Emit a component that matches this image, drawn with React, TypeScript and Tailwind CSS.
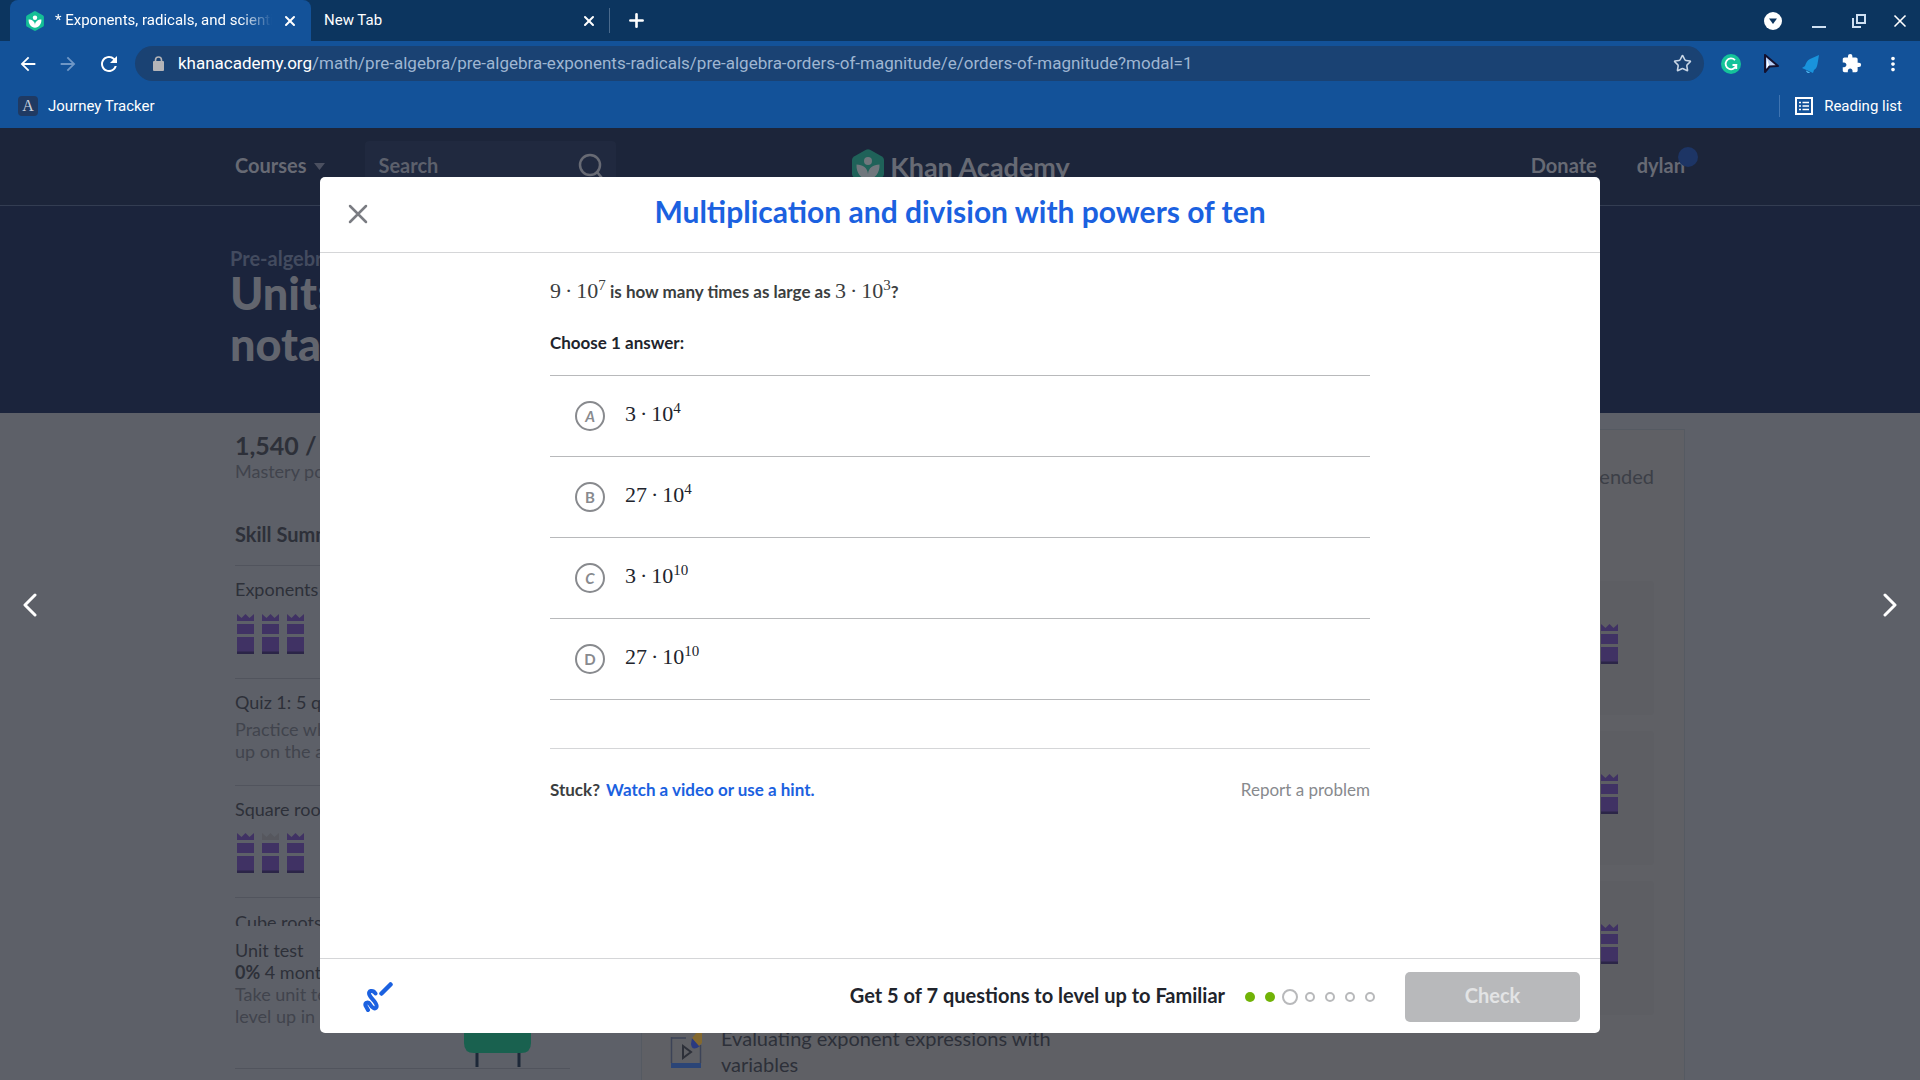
import type React from "react";
import { Plus, Star, X } from "lucide-react";
import {
	MdArrowBack,
	MdArrowForward,
	MdExtension,
	MdMoreVert,
	MdRefresh,
} from "react-icons/md";

const KhanMark: React.FC<{ className: string; hex: string; leaf: string }> = ({
	className,
	hex,
	leaf,
}) => (
	<svg viewBox="0 0 32 36" className={className} aria-hidden="true">
		<path
			d="M14 .7 2 7.500Q0 8.700 0 11v14q0 2.300 2 3.500l12 6.800q2 1.100 4 0l12-6.800q2-1.200 2-3.500V11q0-2.300-2-3.500L18 .7q-2-1.100-4 0Z"
			fill={hex}
		/>
		<circle cx="16" cy="12" r="4" fill={leaf} />
		<path
			d="M4.500 15.500C11 15.500 15.500 19 16 25c.5-6 5-9.500 11.500-9.500C28 24 23 30 16 30S4 24 4.500 15.500Z"
			fill={leaf}
		/>
	</svg>
);

const Castle: React.FC<{ crown?: boolean }> = ({ crown = true }) => (
	<svg viewBox="0 0 17 40" className="h-10 w-[17px]" aria-hidden="true">
		<path
			d="M0 0 4.500 4 8.500 0l4 4L17 0v7H0Z"
			fill={crown ? "#403264" : "#56575e"}
		/>
		<path d="M0 10h17v10H0ZM0 23h17v17H0Z" fill="#403264" />
		<path d="M0 37.500h17V40H0Z" fill="#2b2547" />
	</svg>
);

const skills = [
	{ name: "Exponents", crowns: [true, true, true] },
	{ name: "Square roots", crowns: [true, false, true] },
];

const Power: React.FC<{ factor: string; exponent: string }> = ({
	factor,
	exponent,
}) => (
	<span className="font-['Liberation_Serif',serif] text-[22px] leading-6 font-normal whitespace-nowrap">
		{factor}
		<span className="mx-1">·</span>
		10
		<sup className="relative -top-2 align-baseline text-[15px] leading-none">
			{exponent}
		</sup>
	</span>
);

const choices = [
	{ letter: "A", factor: "3", exponent: "4", slant: true },
	{ letter: "B", factor: "27", exponent: "4", slant: false },
	{ letter: "C", factor: "3", exponent: "10", slant: true },
	{ letter: "D", factor: "27", exponent: "10", slant: false },
];

const Browser: React.FC = () => (
	<header className="shrink-0 bg-[#135299] font-[Roboto,sans-serif] text-white">
		{/* Tab strip */}
		<div className="flex h-[41px] items-center bg-[#0c355f] pl-[10px] text-[15px]">
			<div className="flex h-full w-[301px] items-center rounded-t-lg bg-[#135299] pr-[13px] pl-[15px]">
				<KhanMark className="h-5 w-5 shrink-0" hex="#14bf96" leaf="#fff" />
				<span className="ml-[10px] flex-1 overflow-hidden whitespace-nowrap mask-r-from-85%">
					* Exponents, radicals, and scientific
				</span>
				<button type="button" aria-label="Close tab" className="ml-[10px]">
					<X size={16} strokeWidth={3} />
				</button>
			</div>
			<div className="flex h-full w-[298px] items-center justify-between pr-3 pl-[13px]">
				<span>New Tab</span>
				<button type="button" aria-label="Close tab">
					<X size={16} strokeWidth={3} />
				</button>
			</div>
			<div className="h-[25px] w-px bg-[#4a6a8c]" />
			<button type="button" aria-label="New tab" className="ml-4">
				<Plus size={21} strokeWidth={3} />
			</button>
			<div className="ml-auto flex items-center gap-[22px] pr-[10px]">
				<button type="button" aria-label="Search tabs">
					<svg viewBox="0 0 18 18" className="h-[18px] w-[18px]">
						<circle cx="9" cy="9" r="9" fill="#fff" />
						<path d="M5 6.500h8L9 12Z" fill="#0c355f" />
					</svg>
				</button>
				<button type="button" aria-label="Minimize" className="ml-[6px]">
					<svg viewBox="0 0 18 18" className="h-[18px] w-[18px]">
						<path d="M2 15h14" stroke="#cfe0f2" strokeWidth="2" />
					</svg>
				</button>
				<button type="button" aria-label="Restore">
					<svg
						viewBox="0 0 18 18"
						className="h-[18px] w-[18px]"
						fill="none"
						stroke="#cfe0f2"
						strokeWidth="2"
					>
						<path d="M7 3h8v8H7ZM3 6v9h8" />
					</svg>
				</button>
				<button type="button" aria-label="Close window">
					<X size={20} strokeWidth={2} />
				</button>
			</div>
		</div>

		{/* Toolbar */}
		<div className="flex items-center pt-[5px] pr-4">
			<div className="flex items-center gap-[18px] pl-[17px]">
				<button type="button" aria-label="Back">
					<MdArrowBack size={22} />
				</button>
				<button type="button" aria-label="Forward" className="text-[#6f97c6]">
					<MdArrowForward size={22} />
				</button>
				<button type="button" aria-label="Reload">
					<MdRefresh size={24} />
				</button>
			</div>
			<div className="ml-[14px] flex h-[35px] flex-1 items-center rounded-full bg-[#1a4273] pr-3 pl-[18px]">
				<svg viewBox="0 0 11 15" className="h-[15px] w-[11px]">
					<path
						d="M2.500 6V4a3 3 0 0 1 6 0v2"
						fill="none"
						stroke="#b4b4b8"
						strokeWidth="1.600"
					/>
					<rect y="5" width="11" height="10" rx="1" fill="#b4b4b8" />
				</svg>
				<p className="ml-[14px] flex-1 pt-px text-[17px] whitespace-nowrap text-[#9fb6d2]">
					<span className="text-white">khanacademy.org</span>
					/math/pre-algebra/pre-algebra-exponents-radicals/pre-algebra-orders-of-magnitude/e/orders-of-magnitude?modal=1
				</p>
				<button type="button" aria-label="Bookmark this page">
					<Star size={19} strokeWidth={2} className="text-[#c8d6e6]" />
				</button>
			</div>
			<div className="ml-[17px] flex items-center gap-5">
				<svg viewBox="0 0 20 20" className="h-5 w-5" fill="none">
					<circle cx="10" cy="10" r="10" fill="#15c39a" />
					<path
						d="M14 6.200A5.400 5.400 0 1 0 15.300 11H11.500M15.300 11v4"
						stroke="#fff"
						strokeWidth="1.800"
					/>
				</svg>
				<svg viewBox="0 0 20 20" className="h-5 w-5">
					<path
						d="M4 1v17l4.500-5.500L17 12Z"
						fill="#b9cff5"
						stroke="#14112e"
						strokeWidth="2"
						strokeLinejoin="round"
					/>
					<path d="M6 5v9l2-3Z" fill="#fff" />
				</svg>
				<svg viewBox="0 0 20 20" className="h-5 w-5">
					<path
						d="M18 1 9 5c-3 1.500-4 4-5 7l-3 2 11 5 1-3c2-1 3-3 3.500-6Z"
						fill="#1993dc"
					/>
					<path d="M5 16.500a2.500 2.500 0 0 0 4 2Z" fill="#4db6f0" />
				</svg>
				<MdExtension size={21} />
				<button type="button" aria-label="Menu">
					<MdMoreVert size={22} />
				</button>
			</div>
		</div>

		{/* Bookmarks */}
		<div className="flex h-[47px] items-center justify-between px-[18px] pt-[3px] text-[15px]">
			<a href="#journey" className="flex items-center gap-[10px]">
				<span className="flex h-5 w-5 items-center justify-center rounded-sm bg-[#1f3a63] font-['Liberation_Serif',serif] text-base text-[#c8d0dc]">
					A
				</span>
				Journey Tracker
			</a>
			<button
				type="button"
				className="flex items-center border-l border-[#3f74b1] pl-[15px]"
			>
				<svg
					viewBox="0 0 18 18"
					className="mr-[11px] h-[18px] w-[18px]"
					fill="none"
					stroke="#fff"
					strokeWidth="2"
				>
					<path d="M1 1h16v16H1Z" />
					<path
						d="M4 5.500h2M4 9h2M4 12.500h2M7.500 5.500H14M7.500 9H14M7.500 12.500H14"
						strokeWidth="1.600"
					/>
				</svg>
				Reading list
			</button>
		</div>
	</header>
);

const CoursePage: React.FC = () => (
	<div className="flex h-full flex-col bg-[#5d6068] text-[#2d3039]">
		<nav className="shrink-0 border-b border-[#333d52] bg-[#1c253a] text-xl font-bold text-[#676a74]">
			<div className="mx-auto grid h-[77px] w-full max-w-[1450px] grid-cols-3 items-center">
				<div className="flex items-center pb-1">
					<a href="#courses" className="flex items-center gap-2">
						Courses
						<svg viewBox="0 0 11 7" className="mt-1 h-[7px] w-[11px]">
							<path d="M0 0h11L5.500 7Z" fill="#4b5060" />
						</svg>
					</a>
					<label className="ml-10 flex h-12 w-[251px] items-center rounded bg-[#20293f] px-[13px]">
						<input
							type="search"
							placeholder="Search"
							className="w-full min-w-0 outline-none placeholder:text-[#5c606c]"
						/>
						<svg
							viewBox="0 0 26 26"
							className="h-[26px] w-[26px] shrink-0"
							fill="none"
							stroke="#676a74"
							strokeWidth="2.500"
							strokeLinecap="round"
						>
							<circle cx="13" cy="13" r="10" />
							<path d="m20 20 5 6" />
						</svg>
					</label>
				</div>
				<a
					href="#home"
					className="flex items-center justify-center gap-[6px] pl-[2px] text-[27px] leading-8"
				>
					<KhanMark className="h-9 w-8" hex="#1f6259" leaf="#70777d" />
					<span>Khan Academy</span>
				</a>
				<div className="flex justify-end gap-10 pb-1">
					<a href="#donate">Donate</a>
					<a href="#profile" className="relative">
						dylan
						<span className="absolute -top-1 -right-[13px] h-5 w-5 rounded-full bg-[#1d3565]" />
					</a>
				</div>
			</div>
		</nav>

		<section className="h-[207px] shrink-0 bg-[#1b243c]">
			<div className="mx-auto w-full max-w-[1460px] pt-10">
				<p className="text-xl leading-6 font-bold text-[#434b5f]">Pre-algebra</p>
				<h1 className="-mt-[2px] text-[45px] leading-[51px] font-black text-[#62656e]">
					Unit: Exponents
					<br />
					notation
				</h1>
			</div>
		</section>

		<div className="mx-auto flex min-h-0 w-full max-w-[1450px] flex-1">
			<aside className="w-[335px] shrink-0 pt-4 text-lg leading-[22px]">
				<p className="text-[25px] leading-8 font-bold">1,540 / 2,200</p>
				<p className="leading-5 text-[#41444d]">Mastery points</p>
				<h2 className="mt-[41px] mb-[19px] text-xl leading-6 font-bold">
					Skill Summary
				</h2>
				<div className="h-[361px] overflow-hidden">
					<div className="h-[113px] border-t border-[#51545d] pt-3">
						{skills[0].name}
						<div className="mt-[14px] ml-[2px] flex gap-2">
							{skills[0].crowns.map((crown, i) => (
								<Castle key={i} crown={crown} />
							))}
						</div>
					</div>
					<div className="h-[107px] border-t border-[#51545d] pt-3">
						<p>Quiz 1: 5 questions</p>
						<p className="mt-[5px] text-[#41444d]">
							Practice what you’ve learned
							<br />
							up on the above skills
						</p>
					</div>
					<div className="h-[112px] border-t border-[#51545d] pt-3">
						{skills[1].name}
						<div className="mt-[13px] ml-[2px] flex gap-2">
							{skills[1].crowns.map((crown, i) => (
								<Castle key={i} crown={crown} />
							))}
						</div>
					</div>
					<div className="border-t border-[#51545d] pt-[13px]">Cube roots</div>
				</div>
				<div className="flex justify-between border-b border-[#51545d] pt-[13px] pr-[39px]">
					<div className="pb-[41px]">
						<p>Unit test</p>
						<p>
							<span className="font-bold">0%</span> 4 months ago
						</p>
						<p className="text-[#41444d]">
							Take unit test and
							<br />
							level up in multiple
						</p>
					</div>
					<svg viewBox="0 0 67 60" className="h-[60px] w-[67px] self-end">
						<path d="M13 44v15M55 44v15" stroke="#1d2838" strokeWidth="3" />
						<path d="M0 0h67v35q0 10-10 10H10Q0 45 0 35Z" fill="#19614f" />
					</svg>
				</div>
			</aside>

			<main className="mt-4 ml-[71px] flex flex-1 border border-b-0 border-[#555a62] bg-[#5f6065] pr-[30px] pl-7 text-xl">
				<div className="flex flex-1 gap-[19px] pt-[595px]">
					<svg viewBox="0 0 32 40" className="mt-1 h-10 w-8 shrink-0" fill="none">
						<path
							d="M1.500 8v26M30.500 16v18M1 9h15"
							stroke="#3c4357"
							strokeWidth="1.500"
						/>
						<path d="M1 34h30v5H1Z" fill="#2b4577" />
						<path d="M13 17v12l8-6Z" stroke="#2d3039" strokeWidth="2" />
						<path d="M22 9l8 8q-8 6-9-2Z" fill="#2b3a80" />
						<path d="m29 1 8 8-8 8-7-8Z" fill="#84692f" />
					</svg>
					<p className="w-[350px] leading-[26px]">
						Evaluating exponent expressions with variables
					</p>
				</div>
				<div className="w-[400px] shrink-0 pt-[34px]">
					<p className="text-right leading-6 text-[#3c3f47]">Recommended</p>
					<div className="mt-[93px] flex flex-col gap-4">
						{[0, 1, 2].map((row) => (
							<div
								key={row}
								className="flex h-[134px] items-center justify-end rounded bg-[#5d5e63] pr-9 pb-2"
							>
								<Castle />
							</div>
						))}
					</div>
				</div>
			</main>
		</div>
	</div>
);

const ExerciseModal: React.FC = () => (
	<div
		role="dialog"
		aria-labelledby="exercise-title"
		className="flex h-full flex-col rounded-[5px] bg-white text-[#21242c]"
	>
		<div className="grid h-[76px] shrink-0 grid-cols-[1fr_auto_1fr] items-center border-b border-[#d5d6d8] px-7 pb-2">
			<button
				type="button"
				aria-label="Close"
				className="mt-[6px] justify-self-start text-[#7a7c82]"
			>
				<svg
					viewBox="0 0 20 20"
					className="h-5 w-5"
					stroke="currentColor"
					strokeWidth="2.500"
					strokeLinecap="round"
				>
					<path d="m2 2 16 16M18 2 2 18" />
				</svg>
			</button>
			<h2
				id="exercise-title"
				className="text-3xl leading-9 font-bold text-[#1b61e0]"
			>
				Multiplication and division with powers of ten
			</h2>
		</div>

		<div className="mx-auto w-full max-w-[820px] flex-1 pt-[26px] text-[17px]">
			<p className="leading-6 font-bold text-[#3b3e40]">
				<Power factor="9" exponent="7" /> is how many times as large as{" "}
				<Power factor="3" exponent="3" />?
			</p>
			<fieldset className="mt-[27px]">
				<legend className="mb-5 leading-6 font-bold">Choose 1 answer:</legend>
				<ul className="border-b border-[#b8b9bb]">
					{choices.map((choice) => (
						<li key={choice.letter} className="border-t border-[#b8b9bb]">
							<button
								type="button"
								className="flex h-20 w-full items-center gap-5 pl-[25px]"
							>
								<span
									className={`flex h-[30px] w-[30px] items-center justify-center rounded-full border-2 border-[#888a8e] text-[15px] font-bold text-[#888a8e] ${choice.slant ? "italic" : ""}`}
								>
									{choice.letter}
								</span>
								<span className="pb-[2px]">
									<Power factor={choice.factor} exponent={choice.exponent} />
								</span>
							</button>
						</li>
					))}
				</ul>
			</fieldset>
			<div className="mt-12 flex justify-between border-t border-[#d5d6d8] pt-[29px] leading-6">
				<p className="font-bold text-[#3b3e40]">
					Stuck?{" "}
					<a href="#hint" className="ml-[2px] text-[#1b61e0]">
						Watch a video or use a hint.
					</a>
				</p>
				<a href="#report" className="text-[#888a8e]">
					Report a problem
				</a>
			</div>
		</div>

		<div className="flex h-[75px] shrink-0 items-center border-t border-[#d5d6d8] pt-px pr-5 pl-[43px]">
			<button type="button" aria-label="Scratchpad">
				<svg
					viewBox="0 0 30 30"
					className="h-[30px] w-[30px]"
					fill="none"
					stroke="#1b61e0"
					strokeLinecap="round"
					strokeLinejoin="round"
				>
					<path d="M18.500 11.500 27.500 2.500" strokeWidth="4.500" />
					<path
						d="M12.500 11.500C10 7.500 4.500 8.500 6.500 13 8 17 15 20.500 13.500 25c-1.500 3-4.500.5-6-2C5.500 19.500 1.500 20 2.500 23.500L5 28"
						strokeWidth="4"
					/>
				</svg>
			</button>
			<p className="ml-auto pb-1 text-xl font-bold">
				Get 5 of 7 questions to level up to Familiar
			</p>
			<div className="ml-5 flex w-[130px] items-center justify-between">
				<span className="h-[10px] w-[10px] rounded-full bg-[#71b307]" />
				<span className="h-[10px] w-[10px] rounded-full bg-[#71b307]" />
				<span className="-mx-[3px] h-4 w-4 rounded-full border-2 border-[#b8b9bb]" />
				{[4, 5, 6, 7].map((n) => (
					<span
						key={n}
						className="h-[10px] w-[10px] rounded-full border-2 border-[#b8b9bb]"
					/>
				))}
			</div>
			<button
				type="button"
				disabled
				className="ml-[30px] h-[50px] w-[175px] rounded-[5px] bg-[#b8b9bb] pb-1 text-xl font-bold text-[#e3e4e5]"
			>
				Check
			</button>
		</div>
	</div>
);

const Chevron: React.FC<{ d: string }> = ({ d }) => (
	<svg
		viewBox="0 0 14 24"
		className="h-6 w-[14px]"
		fill="none"
		stroke="#fff"
		strokeWidth="3"
		strokeLinecap="round"
		strokeLinejoin="round"
	>
		<path d={d} />
	</svg>
);

const App: React.FC = () => (
	<div className="flex h-screen flex-col overflow-hidden font-[Lato,sans-serif]">
		<Browser />
		<div className="relative min-h-0 flex-1 overflow-hidden">
			<CoursePage />
			<div className="absolute inset-0 grid grid-cols-[1fr_4fr_1fr] items-center pt-[49px] pb-[47px]">
				<button
					type="button"
					aria-label="Previous"
					className="justify-self-start pl-[23px]"
				>
					<Chevron d="m12 2-10 10 10 10" />
				</button>
				<ExerciseModal />
				<button
					type="button"
					aria-label="Next"
					className="justify-self-end pr-[23px]"
				>
					<Chevron d="m2 2 10 10-10 10" />
				</button>
			</div>
		</div>
	</div>
);

export default App;
